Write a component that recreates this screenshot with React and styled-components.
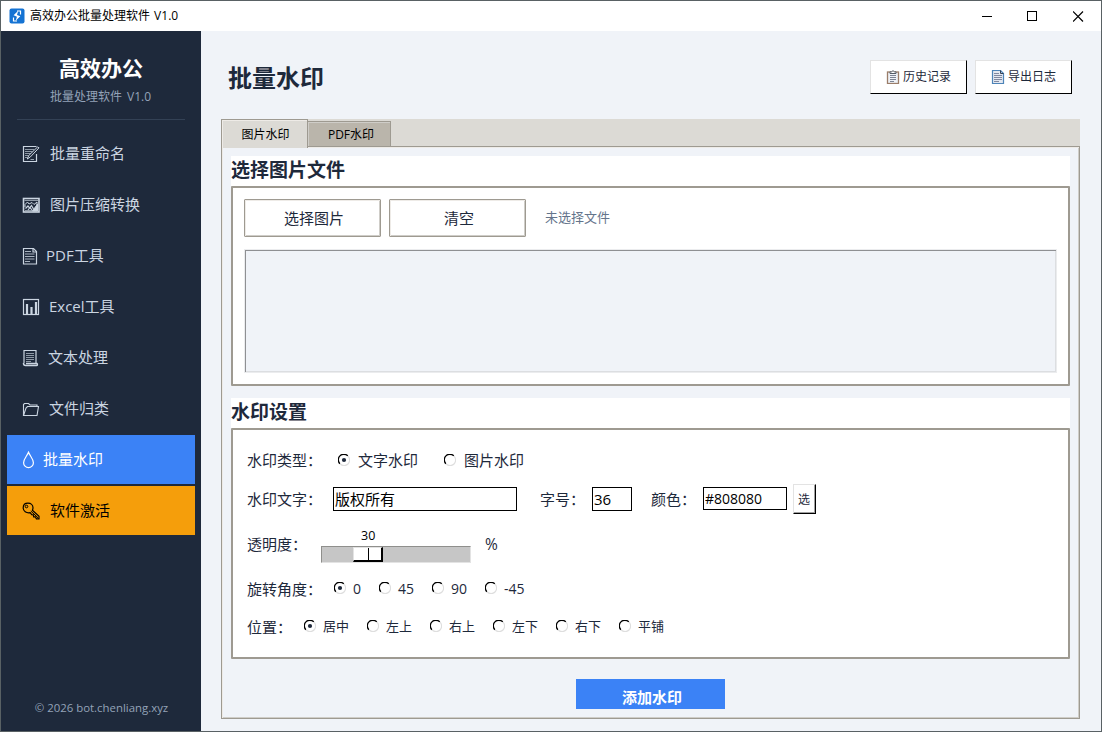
import React, { useState } from 'react';
import styled, { createGlobalStyle } from 'styled-components';

const GlobalStyle = createGlobalStyle`
  * {
    box-sizing: border-box;
  }

  body {
    margin: 0;
    font-family: 'Open Sans', 'Noto Sans CJK SC', sans-serif;
    font-size: 15px;
    color: #1e293b;
  }

  button, input {
    font-family: inherit;
    padding: 0;
    margin: 0;
    border-radius: 0;
    outline: none;
  }
`;

const Window = styled.div`
  display: flex;
  flex-direction: column;
  width: 1102px;
  height: 732px;
  border: 1px solid #596164;
  background-color: #f0f3f8;
  overflow: hidden;
  white-space: nowrap;
`;

const TitleBar = styled.header`
  display: flex;
  align-items: center;
  flex: 0 0 30px;
  padding-left: 8px;
  background-color: #ffffff;
  color: #000000;
`;

const WindowTitle = styled.span`
  flex: 1;
  margin-left: 5px;
  font-size: 12px;
  line-height: 30px;
  word-spacing: 1px;
`;

const WindowButton = styled.span`
  display: flex;
  align-items: center;
  justify-content: center;
  width: 45.5px;
  height: 30px;
`;

const Body = styled.div`
  display: flex;
  flex: 1;
  min-height: 0;
`;

const Sidebar = styled.aside`
  display: flex;
  flex-direction: column;
  flex: 0 0 200px;
  background-color: #1e293b;
`;

const Brand = styled.h1`
  margin: 20px 0 0;
  font-size: 21px;
  line-height: 34px;
  text-align: center;
  color: #ffffff;
`;

const BrandSub = styled.p`
  margin: 2px 0 0;
  padding-right: 1px;
  font-size: 12px;
  line-height: 20px;
  text-align: center;
  word-spacing: 2px;
  color: #94a3b8;
`;

const Divider = styled.hr`
  width: 168px;
  height: 1px;
  margin: 12px 0 9px 16px;
  border: 0;
  background-color: #334155;
`;

const Nav = styled.nav`
  display: flex;
  flex-direction: column;
  gap: 2px;
  padding: 0 6px;
`;

const NavItem = styled.a`
  display: flex;
  align-items: center;
  height: 49px;
  padding: 0 0 2px 15px;
  color: ${({ $color }) => $color || '#cbd5e1'};
  background-color: ${({ $bg }) => $bg || 'transparent'};
`;

const NavIcon = styled.span`
  display: flex;
  flex: 0 0 ${({ $width }) => $width}px;
  padding-top: 2px;
`;

const Copyright = styled.footer`
  margin-top: auto;
  padding: 0 0 13px 1px;
  font-size: 11.4px;
  line-height: 20px;
  text-align: center;
  color: #94a3b8;
`;

const Main = styled.main`
  display: flex;
  flex-direction: column;
  flex: 1;
  padding: 29px 21px 12px 20px;
`;

const PageHeader = styled.div`
  display: flex;
  align-items: flex-start;
  gap: 8px;
  height: 59px;
  padding: 0 8px 0 7px;
`;

const PageTitle = styled.h2`
  flex: 1;
  margin: 0;
  font-size: 24px;
  line-height: 35px;
`;

const HeaderButton = styled.button`
  display: flex;
  align-items: center;
  gap: 3px;
  width: 97px;
  height: 34px;
  padding: 0 0 2px 15px;
  border: 1px solid #e3e3e3;
  border-right-color: #000000;
  border-bottom-color: #000000;
  background-color: #ffffff;
  font-size: 12px;
  color: #1e293b;

  svg {
    margin-top: 2px;
  }
`;

const TabStrip = styled.div`
  display: flex;
  align-items: flex-end;
  height: 27px;
  background-color: #dcdad5;
`;

const Tab = styled.button`
  width: ${({ $active }) => ($active ? 87 : 83)}px;
  height: ${({ $active }) => ($active ? 29 : 25)}px;
  margin-bottom: ${({ $active }) => ($active ? -2 : 0)}px;
  z-index: ${({ $active }) => ($active ? 1 : 0)};
  border: 1px solid #9e9a91;
  border-bottom: 0;
  border-left-width: ${({ $active }) => ($active ? 1 : 0)}px;
  box-shadow: inset 1px 1px 0 ${({ $active }) => ($active ? '#eeebe7' : '#cfcdc8')};
  background-color: ${({ $active }) => ($active ? '#dcdad5' : '#bab5ab')};
  padding-left: ${({ $active }) => ($active ? 2 : 4)}px;
  font-size: 12px;
  color: #000000;
`;

const Pane = styled.div`
  flex: 1;
  display: flex;
  flex-direction: column;
  padding: 9px;
  border: 1px solid #9e9a91;
  box-shadow: inset 1px 1px 0 #eeebe7, inset -1px -1px 0 #cfcdc8;
`;

const SectionTitle = styled.h3`
  height: 30px;
  margin: ${({ $gap }) => $gap || 0}px 0 0;
  background-color: #ffffff;
  font-size: 19px;
  line-height: 29px;
`;

const Frame = styled.section`
  height: ${({ $height }) => $height}px;
  border: 2px solid #9e9a91;
  border-radius: 1px;
  background-color: #ffffff;
`;

const FileBar = styled.div`
  display: flex;
  align-items: center;
  gap: 8px;
  padding: 11px 11px 0;
`;

const FileButton = styled.button`
  width: 137px;
  height: 38px;
  padding: 0 0 2px 3px;
  border: 1px solid #9e9a91;
  border-radius: 1px;
  box-shadow: inset 1px 1px 0 #eeebe7, inset -1px -1px 0 #cfcdc8;
  background-color: #ffffff;
  font-size: 15px;
  color: #1e293b;
`;

const FileHint = styled.span`
  margin: -3px 0 0 11px;
  font-size: 13px;
  color: #64748b;
`;

const FileList = styled.div`
  height: 124px;
  margin: 12px 11px 0;
  border: 1px solid #ebecee;
  box-shadow: inset 1px 1px 0 #8f9093, inset -1px -1px 0 #dcdee1;
  background-color: #f0f3f8;
`;

const Row = styled.div`
  display: flex;
  align-items: center;
  height: ${({ $height }) => $height || 30}px;
  margin-top: ${({ $gap }) => $gap}px;
  padding-left: 14px;
`;

const Label = styled.span`
  flex: 0 0 ${({ $width }) => $width}px;
  margin-top: ${({ $raise }) => ($raise ? -2 : 0)}px;
  font-size: 15px;
  line-height: 30px;
`;

const RadioLabel = styled.label`
  display: flex;
  align-items: center;
  gap: ${({ $gap }) => $gap || 7}px;
  flex: 0 0 ${({ $width }) => $width}px;
  margin-top: ${({ $drop }) => ($drop ? 0 : -2)}px;
  font-size: ${({ $size }) => $size || 15}px;
  line-height: 28px;

  svg {
    flex: none;
    margin-bottom: ${({ $drop }) => ($drop ? 2 : 0)}px;
  }
`;

const Field = styled.input`
  flex: none;
  width: ${({ $width }) => $width}px;
  height: ${({ $height }) => $height || 24}px;
  margin-top: ${({ $height }) => ($height ? -1 : 0)}px;
  padding: 0 0 1px 1px;
  border: 1px solid #000000;
  background-color: #ffffff;
  font-size: ${({ $size }) => $size || 15}px;
  color: #000000;
`;

const FieldGap = styled.span`
  flex: 0 0 ${({ $width }) => $width}px;
`;

const PickButton = styled.button`
  width: 23px;
  height: 30px;
  padding: 0 1px 1px 0;
  border: 1px solid #e3e3e3;
  border-right-color: #000000;
  border-bottom-color: #000000;
  box-shadow: inset -1px -1px 0 #a0a0a0;
  background-color: #ffffff;
  font-size: 12px;
  color: #1e293b;
`;

const Scale = styled.div`
  display: flex;
  flex-direction: column;
  width: 150px;
  height: 38px;
`;

const ScaleValue = styled.span`
  height: 20px;
  padding-left: 40px;
  font-size: 12.5px;
  line-height: 20px;
  color: #000000;
`;

const Trough = styled.div`
  height: 17px;
  padding-left: 31px;
  border: 1px solid #e3e3e3;
  border-top-color: #8f8f8c;
  border-left-color: #8f8f8c;
  background-color: #c6c6c6;
`;

const Thumb = styled.div`
  display: flex;
  width: 30px;
  height: 15px;
  border: 1px solid #e3e3e3;
  border-right: 2px solid #000000;
  border-bottom: 2px solid #000000;
  background-color: #ffffff;

  &::before {
    content: '';
    width: 14px;
    border-right: 1px solid #000000;
  }
`;

const Percent = styled.span`
  margin: -2px 0 0 14px;
  font-size: 15.5px;
`;

const SubmitButton = styled.button`
  align-self: center;
  width: 149px;
  height: 30px;
  margin-top: 20px;
  padding-top: 5px;
  padding-left: 3px;
  border: 0;
  background-color: #3b82f6;
  font-size: 15px;
  font-weight: bold;
  color: #ffffff;
`;

const Svg = ({ size = 18, children, ...rest }) => (
  <svg
    width={size}
    height={size}
    viewBox={`0 0 ${size} ${size}`}
    fill="none"
    stroke="currentColor"
    {...rest}
  >
    {children}
  </svg>
);

const AppLogo = () => (
  <svg width="16" height="16" viewBox="0 0 16 16">
    <rect x="0.5" y="0.5" width="15" height="15" rx="2" fill="#1473d3" />
    <path d="M9.2 2.8 4.6 7.3 8 8.7 6.6 12.8 11.3 8.2 8 6.9z" fill="#ffffff" />
    <path d="M8 3h3.5v3.5M4.5 9.5V13H8" fill="none" stroke="#ffffff" strokeWidth="1.2" />
  </svg>
);

const RenameIcon = () => (
  <Svg>
    <path d="M14.5 1.5h-13v15h13V9" strokeWidth="1.2" />
    <path d="M3 4.5h9M3 6.5h7.5M3 8.5h6M3 10.5h4M3 12.5h2.5" opacity="0.65" />
    <path d="M17 2.8 8.3 12 5.3 14l1.4-3.4L15.5 2z" fill="#1e293b" />
    <path d="M8.5 14.5H12" opacity="0.7" />
  </Svg>
);

const PictureIcon = () => (
  <Svg>
    <rect x="1.5" y="2.5" width="15.5" height="13.5" strokeWidth="1.6" />
    <path d="M2.5 4.5h13.5M3 14.5h13" opacity="0.65" />
    <path d="M3 11V8.5L5.5 6 7 8l3-1.5 2 2L15 6v5" />
    <path d="M3.5 12.5 6 10l1.5 2 2-2.5 2 3.5M6 14l2-2.5 2 2.5" strokeWidth="1.2" />
    <path d="M10.5 15 15.5 8v7z" fill="currentColor" />
  </Svg>
);

const PageIcon = () => (
  <Svg>
    <path d="M1.5 1.5h10l3 3V17h-13z" strokeWidth="1.2" />
    <path d="M11 1.5V5h3.5" strokeWidth="1.2" />
    <path d="M3 4.5h6M3 7h9.5M3 9.5h9.5M3 12h9.5M3 14.5h5" opacity="0.8" />
  </Svg>
);

const ChartIcon = () => (
  <Svg>
    <rect x="1.5" y="1.5" width="15" height="15" strokeWidth="1.2" />
    <path d="M5 6v10.5M9.5 9v7.5M14 4v12.5" strokeWidth="2.2" />
  </Svg>
);

const ScrollIcon = () => (
  <Svg>
    <path d="M2 14V1.5h12v12.500" strokeWidth="1.2" />
    <path d="M4 4.5h8M4 6.5h8M4 8.5h8M4 10.5h8M4 12.5h5" opacity="0.65" />
    <path d="M1.5 14c0 2.500 1 2.500 2 2.500h11c1.200 0 1-1.500.5-2H4" strokeWidth="1.5" />
  </Svg>
);

const FolderIcon = () => (
  <Svg>
    <path d="M1.5 15.5V4.5l1-1h4l1.500 1.500h7v1.500" strokeWidth="1.1" />
    <path d="M1.500 15.500h13.500L16.500 6.500H5.500L4 8z" strokeWidth="1.1" />
  </Svg>
);

const DropIcon = () => (
  <Svg>
    <path
      d="M6.5 1.3C5.2 4.8 1.6 8 1.6 11.7a4.9 4.9 0 0 0 9.8 0C11.4 8 7.8 4.8 6.5 1.3z"
      strokeWidth="1.2"
    />
  </Svg>
);

const KeyIcon = () => (
  <Svg>
    <path
      d="M6 1.2c2.8 0 5 1.8 5 4.6 0 1-.3 1.8-.6 2.5l6.6 6v2.5h-2.6l-1-2h-1.7l-.3-2-1.7-.2-1.5-1.9c-4 .7-7-1.5-7-4.9 0-2.8 2-4.6 4.8-4.6z"
      strokeWidth="1.2"
    />
    <circle cx="4.5" cy="4.5" r="1.3" />
    <path d="m8.8 9 7.4 7" />
  </Svg>
);

const ClipboardIcon = () => (
  <Svg size={14}>
    <rect x="1.5" y="2" width="11" height="11.5" fill="#eef1f7" stroke="#9b7d69" strokeWidth="1.3" />
    <path d="M4 3.5V1.8h1.7L7 .6l1.3 1.2H10v1.7z" fill="#ffffff" stroke="#535b66" />
    <path d="M4 5.5h6M4 7.5h6M4 9.5h6M4 11.5h4" stroke="#7c8494" />
  </Svg>
);

const DocIcon = () => (
  <Svg size={14}>
    <path d="M1.5.5h8l3 3v10h-11z" fill="#e3e8f1" stroke="#4d84b8" strokeWidth="1.2" />
    <path d="M9.5.5v3h3" stroke="#334155" />
    <path d="M3 3.5h5M3 5.5h8M3 7.5h8M3 9.5h8M3 11.5h5" stroke="#8088a0" />
  </Svg>
);

const RadioDot = ({ checked }) => (
  <svg width="12" height="12" viewBox="0 0 12 12" fill="none">
    <path d="M1.9 9.7A5.3 5.3 0 0 1 9.8 1.9" stroke="#000000" strokeWidth="1.3" />
    <path d="M10 2.2A5.3 5.3 0 0 1 2.2 10" stroke="#dedede" strokeWidth="1.1" />
    {checked && <circle cx="6" cy="6" r="2.1" fill="#1e293b" />}
  </svg>
);

const navItems = [
  { text: '批量重命名', icon: <RenameIcon />, width: 28 },
  { text: '图片压缩转换', icon: <PictureIcon />, width: 28 },
  { text: 'PDF工具', icon: <PageIcon />, width: 24 },
  { text: 'Excel工具', icon: <ChartIcon />, width: 27 },
  { text: '文本处理', icon: <ScrollIcon />, width: 26 },
  { text: '文件归类', icon: <FolderIcon />, width: 27 },
  { text: '批量水印', icon: <DropIcon />, width: 21, bg: '#3b82f6', color: '#ffffff' },
  { text: '软件激活', icon: <KeyIcon />, width: 28, bg: '#f59e0b', color: '#000000' },
];

const types = [
  { text: '文字水印', width: 106 },
  { text: '图片水印', width: 90 },
];

const angles = [
  { text: '0', width: 45 },
  { text: '45', width: 53 },
  { text: '90', width: 53 },
  { text: '-45', width: 53 },
];

const positions = ['居中', '左上', '右上', '左下', '右下', '平铺'].map((text) => ({
  text,
  width: 63,
}));

const RadioGroup = ({ options, size, gap, drop }) => {
  const [value, setValue] = useState(options[0].text);

  return options.map(({ text, width }) => (
    <RadioLabel
      key={text}
      $width={width}
      $size={size}
      $gap={gap}
      $drop={drop}
      onClick={() => setValue(text)}
    >
      <RadioDot checked={value === text} />
      {text}
    </RadioLabel>
  ));
};

const App = () => {
  return (
    <Window>
      <GlobalStyle />
      <TitleBar>
        <AppLogo />
        <WindowTitle>高效办公批量处理软件 V1.0</WindowTitle>
        <WindowButton>
          <Svg size={11} shapeRendering="crispEdges">
            <path d="M0 5.5h10" />
          </Svg>
        </WindowButton>
        <WindowButton>
          <Svg size={11} shapeRendering="crispEdges">
            <path d="M.5.5h9v9h-9z" />
          </Svg>
        </WindowButton>
        <WindowButton>
          <Svg size={11}>
            <path d="m0 .5 10 10M10 .5l-10 10" strokeWidth="1.2" />
          </Svg>
        </WindowButton>
      </TitleBar>
      <Body>
        <Sidebar>
          <Brand>高效办公</Brand>
          <BrandSub>批量处理软件 V1.0</BrandSub>
          <Divider />
          <Nav>
            {navItems.map(({ text, icon, width, bg, color }) => (
              <NavItem key={text} $bg={bg} $color={color}>
                <NavIcon $width={width}>{icon}</NavIcon>
                {text}
              </NavItem>
            ))}
          </Nav>
          <Copyright>© 2026 bot.chenliang.xyz</Copyright>
        </Sidebar>
        <Main>
          <PageHeader>
            <PageTitle>批量水印</PageTitle>
            <HeaderButton>
              <ClipboardIcon />
              历史记录
            </HeaderButton>
            <HeaderButton>
              <DocIcon />
              导出日志
            </HeaderButton>
          </PageHeader>
          <TabStrip>
            <Tab $active>图片水印</Tab>
            <Tab>PDF水印</Tab>
          </TabStrip>
          <Pane>
            <SectionTitle>选择图片文件</SectionTitle>
            <Frame $height={200}>
              <FileBar>
                <FileButton>选择图片</FileButton>
                <FileButton>清空</FileButton>
                <FileHint>未选择文件</FileHint>
              </FileBar>
              <FileList />
            </Frame>
            <SectionTitle $gap={12}>水印设置</SectionTitle>
            <Frame $height={231}>
              <Row $gap={16}>
                <Label $width={91} $raise>水印类型：</Label>
                <RadioGroup options={types} gap={8} />
              </Row>
              <Row $gap={8}>
                <Label $width={86}>水印文字：</Label>
                <Field $width={184} defaultValue="版权所有" />
                <FieldGap $width={23} />
                <Label $width={52}>字号：</Label>
                <Field $width={40} defaultValue="36" />
                <FieldGap $width={19} />
                <Label $width={52}>颜色：</Label>
                <Field $width={84} $height={23} $size={14} defaultValue="#808080" />
                <FieldGap $width={6} />
                <PickButton>选</PickButton>
              </Row>
              <Row $gap={12} $height={38}>
                <Label $width={74} $raise>透明度：</Label>
                <Scale>
                  <ScaleValue>30</ScaleValue>
                  <Trough>
                    <Thumb />
                  </Trough>
                </Scale>
                <Percent>%</Percent>
              </Row>
              <Row $gap={10}>
                <Label $width={87}>旋转角度：</Label>
                <RadioGroup options={angles} size={14} drop />
              </Row>
              <Row $gap={8}>
                <Label $width={57}>位置：</Label>
                <RadioGroup options={positions} size={13} />
              </Row>
            </Frame>
            <SubmitButton>添加水印</SubmitButton>
          </Pane>
        </Main>
      </Body>
    </Window>
  );
};

export default App;
